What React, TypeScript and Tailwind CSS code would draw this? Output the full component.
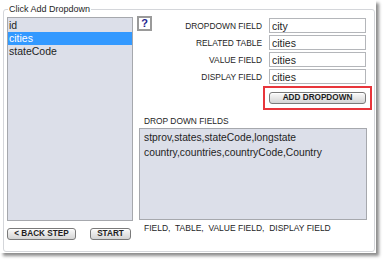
const fields = [
  { label: "DROPDOWN FIELD", value: "city" },
  { label: "RELATED TABLE", value: "cities" },
  { label: "VALUE FIELD", value: "cities" },
  { label: "DISPLAY FIELD", value: "cities" },
]

const columns = ["id", "cities", "stateCode"]

const btn =
  "h-[12px] rounded-[3px] border border-[#7a7a7a] bg-gradient-to-b from-[#fafafa] to-[#d4d4d4] text-[8.2px] font-bold leading-[10px] text-[#1e1e1e] shadow-[inset_0_1px_0_#fff]"

export default function App() {
  return (
    <div className="h-[263px] w-[387px] bg-white font-['Liberation_Sans',Arial,sans-serif] text-[#1e1e1e]">
      <div className="h-[253px] w-[376px] bg-white pt-[3px] pl-[3px] shadow-[3px_3px_3px_rgba(0,0,0,0.45)]">
        <fieldset className="h-[249px] w-[372px] rounded-[3px] border border-[#d4d6da]">
          <legend className="ml-[4px] px-[1px] text-[9px] leading-[12px] text-[#1e1e1e]">
            Click Add Dropdown
          </legend>
          <div className="flex gap-[4px] pl-[3px] pt-[2px]">
            {/* left: column list + nav buttons */}
            <div className="flex w-[126px] flex-col">
              <div className="h-[204px] border border-[#a6a8ad] bg-[#dcdfe9] pt-[1px] text-[10.5px] leading-[13px]">
                {columns.map((c) => (
                  <div
                    key={c}
                    className={c === "cities" ? "bg-[#3399ff] pl-[1px] text-white" : "pl-[1px]"}
                  >
                    {c}
                  </div>
                ))}
              </div>
              <div className="mt-[7px] flex justify-between pr-[2px]">
                <button className={btn + " w-[69px]"}>&lt; BACK STEP</button>
                <button className={btn + " w-[41px]"}>START</button>
              </div>
            </div>

            {/* right: field settings */}
            <div className="flex w-[235px] flex-col">
              <div className="-mt-[1px] flex">
                <div className="flex h-[15px] w-[15px] items-center justify-center border-2 border-[#9a9a9a] bg-white text-[11px] font-bold leading-none text-[#1d1d8f]">
                  ?
                </div>
                <div className="flex flex-1 flex-col gap-[2px] pt-[2px] pr-[6px]">
                  {fields.map((f) => (
                    <div key={f.label} className="flex items-center justify-end gap-[7px]">
                      <span className="text-[8.4px] leading-[10px]">{f.label}</span>
                      <div className="h-[15px] w-[97px] border border-[#b4b6ba] bg-white pl-[2px] text-[10.5px] leading-[14px]">
                        {f.value}
                      </div>
                    </div>
                  ))}
                  <div className="mt-[0px] flex justify-end pr-0">
                    <div className="-mr-[6px] border-2 border-[#e8353b] p-[4px]">
                      <button className={btn + " block w-[97px]"}>ADD DROPDOWN</button>
                    </div>
                  </div>
                </div>
              </div>

              <div className="mt-[6px] pl-[7px] text-[8.4px] leading-[11px]">DROP DOWN FIELDS</div>
              <div className="mt-[1px] ml-[2px] h-[92px] w-[228px] border border-[#a6a8ad] bg-[#dcdfe9] pl-[4px] pt-[1px] text-[10.3px] leading-[15px]">
                <div>stprov,states,stateCode,longstate</div>
                <div>country,countries,countryCode,Country</div>
              </div>
              <div className="mt-[3px] whitespace-pre pl-[7px] text-[8.5px] leading-[11px]">
                {"FIELD,  TABLE,  VALUE FIELD,  DISPLAY FIELD"}
              </div>
            </div>
          </div>
        </fieldset>
      </div>
    </div>
  )
}
